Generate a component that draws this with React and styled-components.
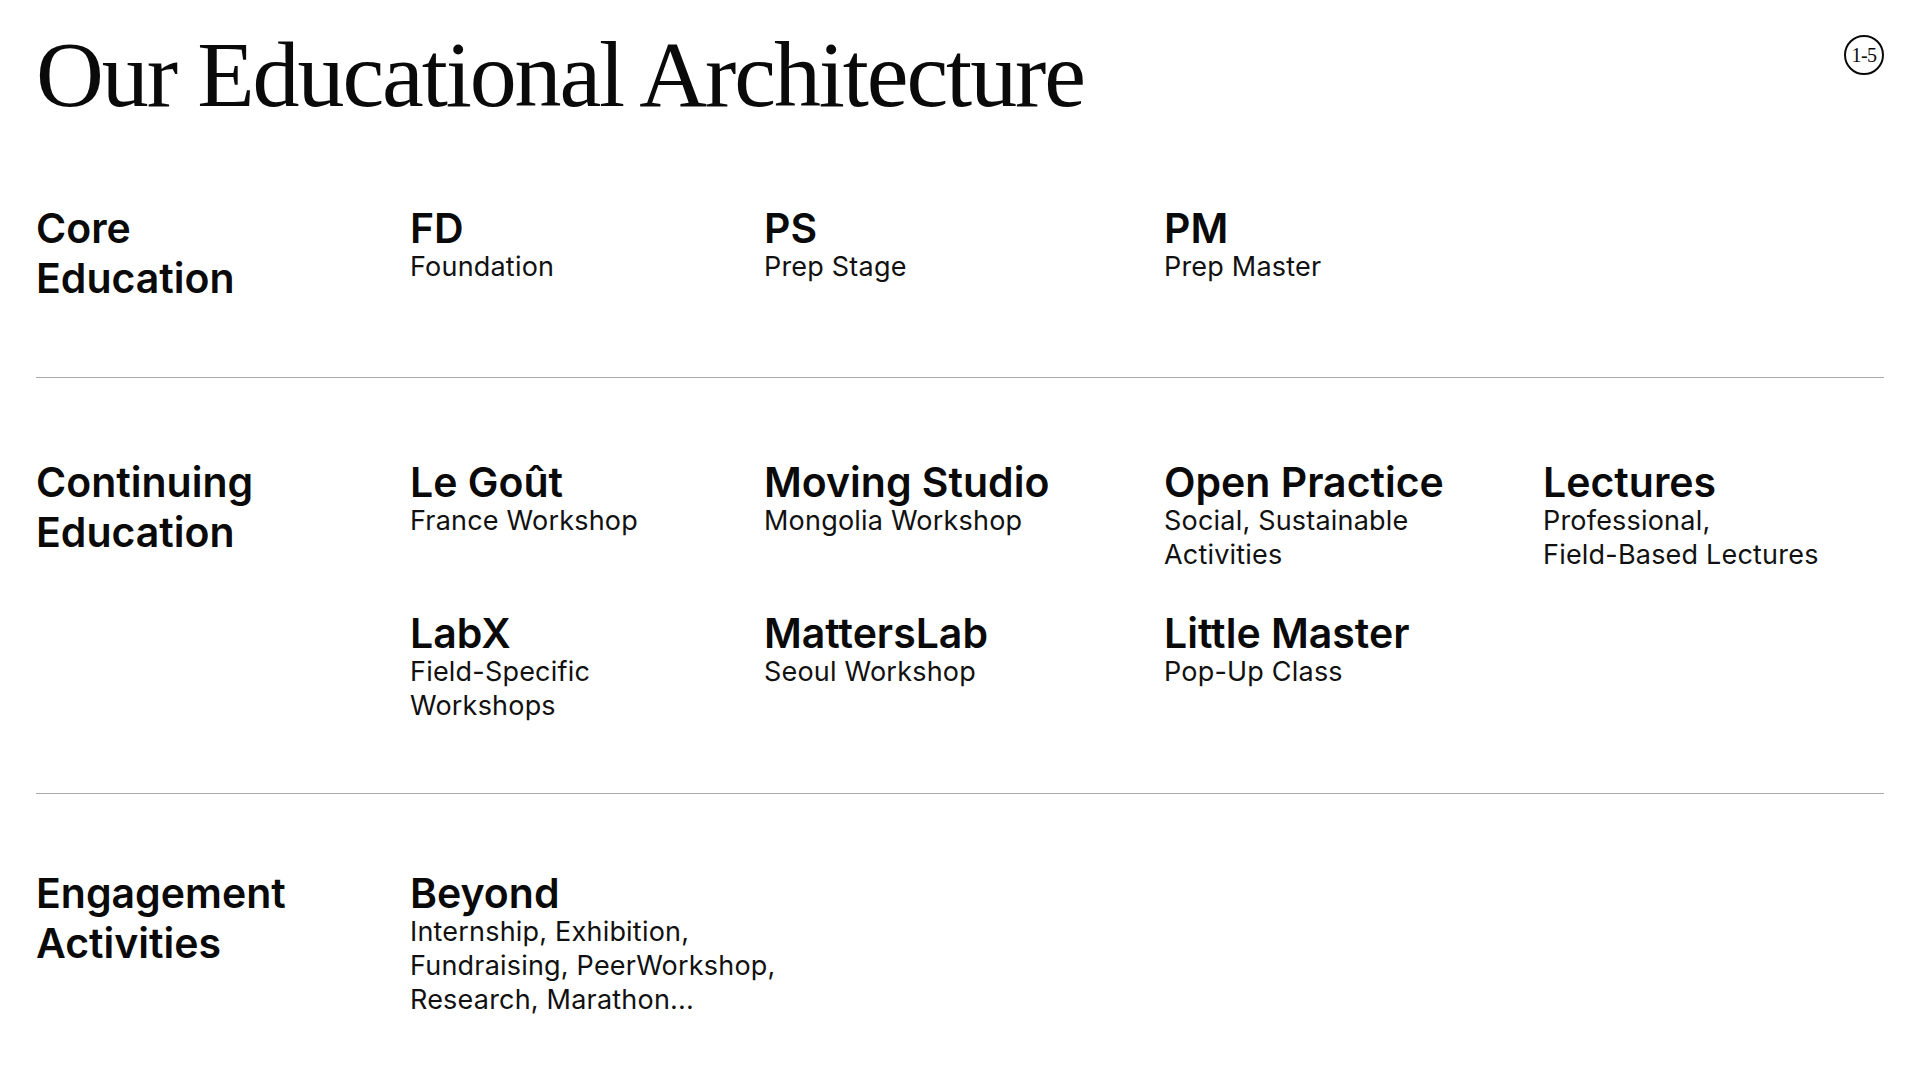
import React from "react";
import styled, { createGlobalStyle } from "styled-components";

const Global = createGlobalStyle`
  html, body { margin: 0; padding: 0; background: #ffffff; }
  body { font-family: Inter, "Liberation Sans", sans-serif; color: #0a0a0a; }
  * { box-sizing: border-box; }
`;

const Page = styled.main`
  width: 1920px;
  min-height: 1080px;
  padding: 27px 36px 0 36px;
  background: #fff;
`;

const Header = styled.header`
  display: flex;
  justify-content: space-between;
  align-items: flex-start;
  margin-bottom: 82px;
`;

const Title = styled.h1`
  margin: 0;
  font-family: "Liberation Serif", "Times New Roman", serif;
  font-weight: 400;
  font-size: 94px;
  line-height: 94px;
  letter-spacing: -2.1px;
  color: #0a0a0a;
`;

const PageBadge = styled.div`
  width: 40px;
  height: 40px;
  margin-top: 8px;
  border: 2px solid #0a0a0a;
  border-radius: 50%;
  display: flex;
  align-items: center;
  justify-content: center;
  font-family: "Liberation Serif", "Times New Roman", serif;
  font-size: 20px;
  letter-spacing: -0.5px;
  color: #0a0a0a;
`;

const Section = styled.section`
  display: grid;
  grid-template-columns: 374px 354px 400px 379px 1fr;
  row-gap: 36px;
  padding: ${(p) => p.$top}px 0 ${(p) => p.$bottom}px 0;
  border-bottom: ${(p) => (p.$last ? "none" : "1.5px solid #ababab")};
`;

const Label = styled.h2`
  grid-column: 1;
  grid-row: 1 / span ${(p) => p.$rows};
  margin: 0;
  font-family: Inter, "Liberation Sans", sans-serif;
  font-weight: 600;
  font-size: 41px;
  line-height: 50px;
  letter-spacing: 0px;
`;

const Item = styled.div`
  padding-top: 3px;
  grid-column: ${(p) => p.$col};
  grid-row: ${(p) => p.$row};
`;

const ItemTitle = styled.div`
  font-family: Inter, "Liberation Sans", sans-serif;
  font-weight: 600;
  font-size: 41px;
  line-height: 44px;
  letter-spacing: 0px;
  white-space: nowrap;
`;

const ItemSub = styled.div`
  font-family: Inter, "Liberation Sans", sans-serif;
  font-weight: 400;
  font-size: 27px;
  line-height: 34px;
  letter-spacing: 0.2px;
  white-space: nowrap;
  color: #111;
`;

const sections = [
  {
    label: ["Core", "Education"],
    top: 0,
    bottom: 74,
    items: [
      { t: "FD", s: ["Foundation"] },
      { t: "PS", s: ["Prep Stage"] },
      { t: "PM", s: ["Prep Master"] },
    ],
  },
  {
    label: ["Continuing", "Education"],
    top: 79,
    bottom: 70,
    items: [
      { t: "Le Goût", s: ["France Workshop"] },
      { t: "Moving Studio", s: ["Mongolia Workshop"] },
      { t: "Open Practice", s: ["Social, Sustainable", "Activities"] },
      { t: "Lectures", s: ["Professional,", "Field-Based Lectures"] },
      { t: "LabX", s: ["Field-Specific", "Workshops"] },
      { t: "MattersLab", s: ["Seoul Workshop"] },
      { t: "Little Master", s: ["Pop-Up Class"] },
    ],
  },
  {
    label: ["Engagement", "Activities"],
    top: 74,
    bottom: 40,
    items: [
      {
        t: "Beyond",
        s: ["Internship, Exhibition,", "Fundraising, PeerWorkshop,", "Research, Marathon..."],
      },
    ],
  },
];

export default function App() {
  return (
    <>
      <Global />
      <Page>
        <Header>
          <Title>Our Educational Architecture</Title>
          <PageBadge>1-5</PageBadge>
        </Header>
        {sections.map((sec, si) => {
          const rows = Math.ceil(sec.items.length / 4);
          return (
            <Section
              key={si}
              $top={sec.top}
              $bottom={sec.bottom}
              $last={si === sections.length - 1}
            >
              <Label $rows={rows}>
                {sec.label[0]}
                <br />
                {sec.label[1]}
              </Label>
              {sec.items.map((it, i) => (
                <Item key={i} $col={(i % 4) + 2} $row={Math.floor(i / 4) + 1}>
                  <ItemTitle>{it.t}</ItemTitle>
                  {it.s.map((line, k) => (
                    <ItemSub key={k}>{line}</ItemSub>
                  ))}
                </Item>
              ))}
            </Section>
          );
        })}
      </Page>
    </>
  );
}
